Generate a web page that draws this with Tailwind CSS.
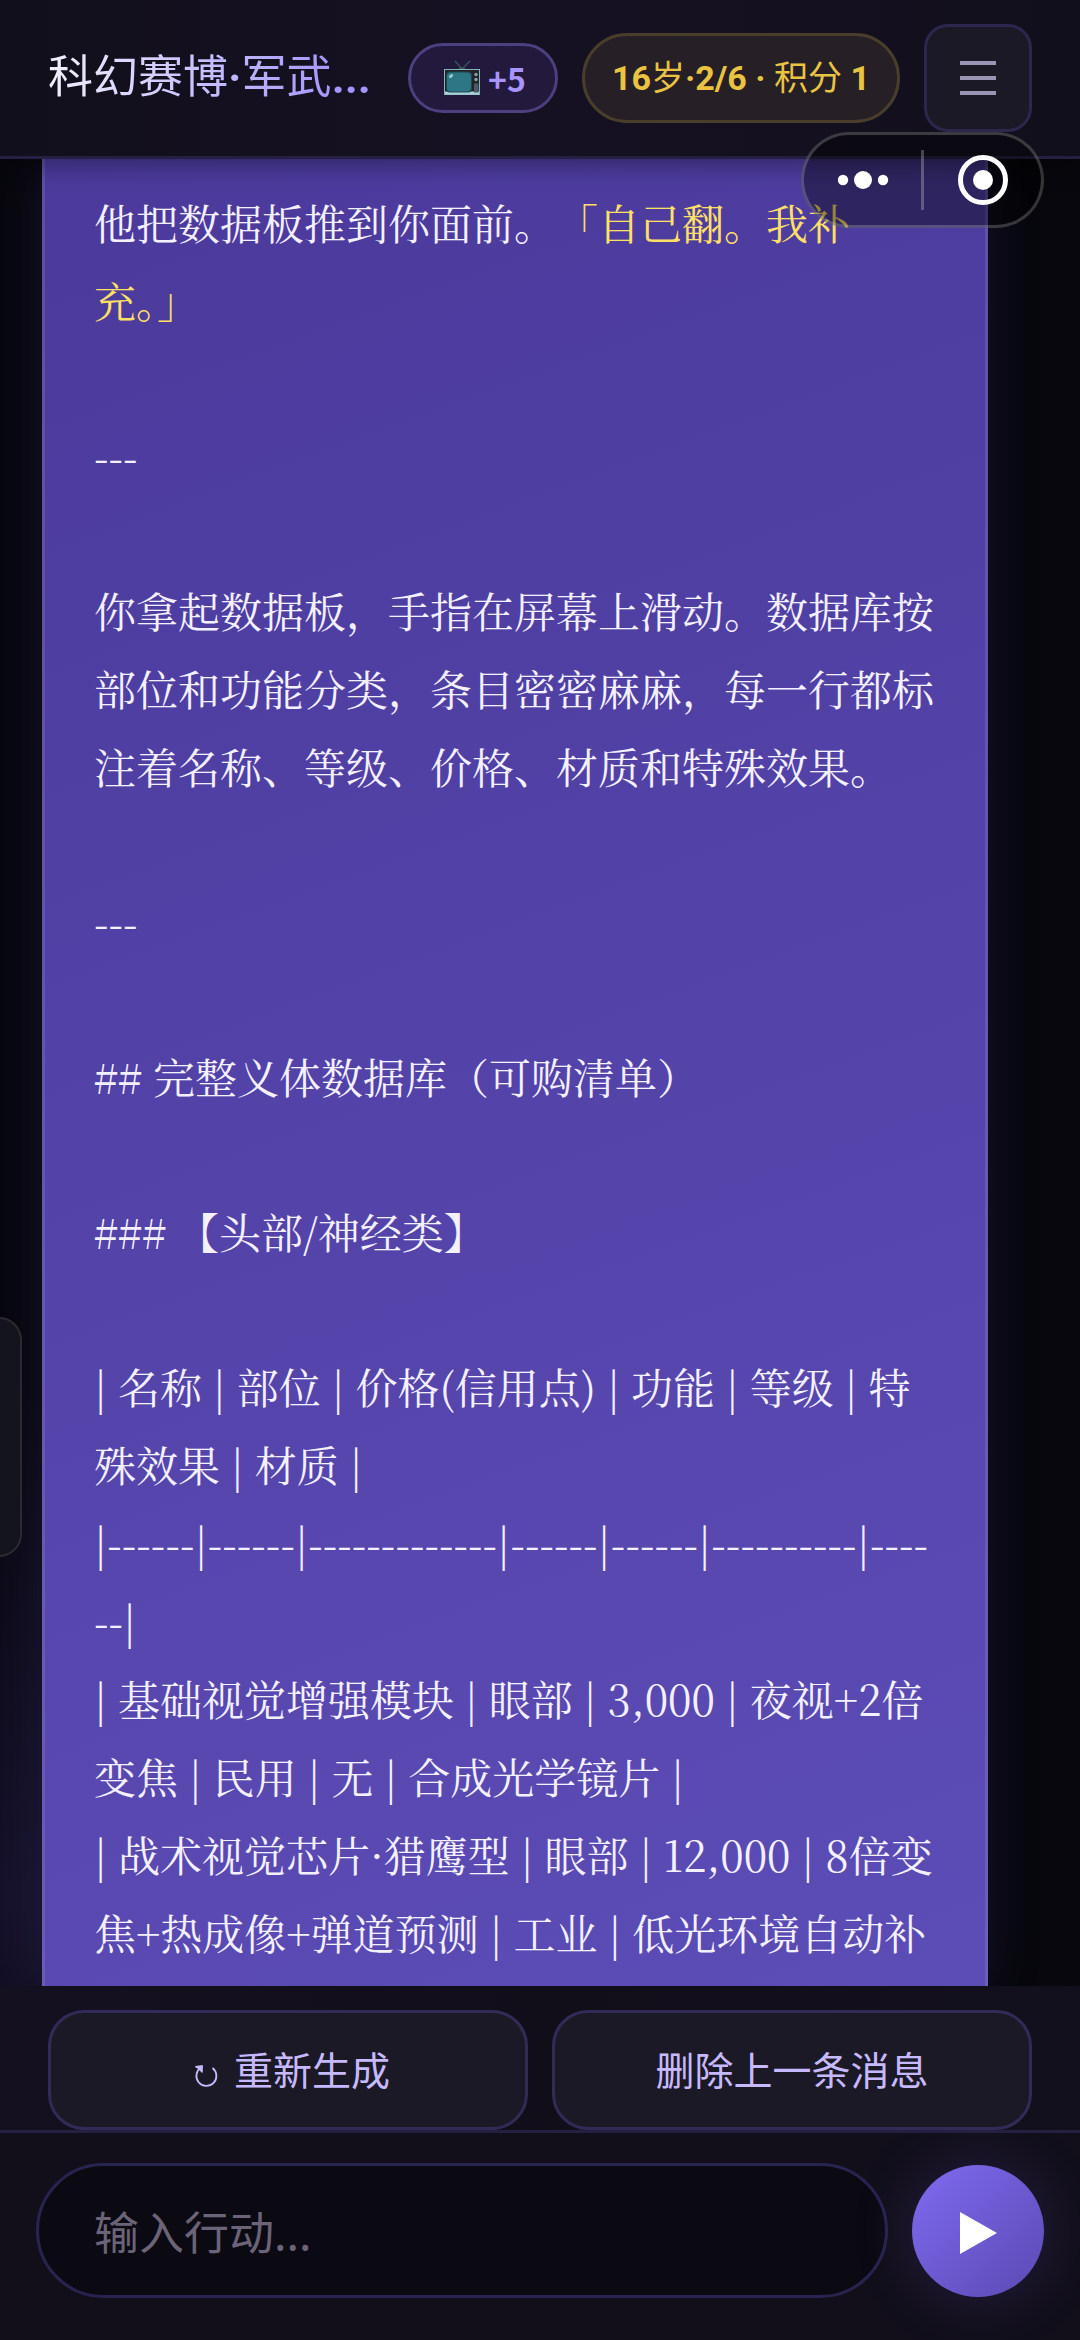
<!DOCTYPE html>
<html lang="zh-CN">
<head>
<meta charset="utf-8">
<meta name="viewport" content="width=device-width, initial-scale=1">
<title>科幻赛博·军武</title>
<script src="https://cdn.jsdelivr.net/npm/@tailwindcss/browser@4"></script>
</head>
<body class="flex h-screen flex-col overflow-hidden bg-[#07070d] font-['Noto_Sans_CJK_SC',sans-serif] text-[#f3f0ff]">

  <header class="relative z-10 flex h-[159px] shrink-0 items-center gap-6 border-b-[3px] border-[#252041] bg-linear-to-r from-[#120f1c] via-[#151122] to-[#120f1c] px-12 shadow-[0_4px_24px_rgba(0,0,0,0.4)]">
    <h1 class="min-w-0 flex-1 overflow-hidden bg-linear-to-r from-[#f3f0ff] to-[#a596ff] to-85% bg-clip-text font-[Roboto,'Noto_Sans_CJK_SC',sans-serif] text-[45px] leading-[64px] whitespace-nowrap text-transparent">科幻赛博<b>·</b>军武<b>...</b></h1>
    <button type="button" class="flex h-[70px] w-[150px] shrink-0 items-center justify-center gap-2 rounded-full border-[3px] border-[#4d3f80] bg-[#23193c] pl-1 text-[32px] font-bold text-[#a794ff]">
      <svg class="h-9 w-9 shrink-0" viewBox="0 0 36 36" aria-hidden="true">
        <path d="M11 1l7 8 8-8" fill="none" stroke="#3c5a5c" stroke-width="1.2"/>
        <path d="M14 9q4-2.500 8 0z" fill="#3c5a5c"/>
        <rect x=".5" y="9.500" width="35" height="25" fill="#262228" stroke="#7fb5bd"/>
        <rect x="1" y="31.500" width="34" height="3" fill="#a9d3d8"/>
        <rect x="2" y="11.500" width="26" height="21" rx="4" fill="#1d4850"/>
        <rect x="3" y="12.500" width="24" height="19" rx="4" fill="#2d7685"/>
        <ellipse cx="7" cy="16" rx="2.500" ry="1.500" fill="#9cc9cf" transform="rotate(-40 7 16)"/>
        <circle cx="32" cy="14.500" r="1.700" fill="#7fa5b0"/><circle cx="32" cy="19.500" r="1.700" fill="#7fa5b0"/>
        <rect x="30" y="23.500" width="4.500" height="9" fill="#4b5968"/>
      </svg>
      <span>+5</span>
    </button>
    <div class="flex h-[90px] w-[318px] shrink-0 items-center justify-center rounded-full border-[3px] border-[#493e2b] bg-[#261f25] font-[Roboto,'Noto_Sans_CJK_SC',sans-serif] text-[34px] whitespace-pre text-[#e9c443]"><b>16</b>岁<b>·2/6 · </b>积分<b> 1</b></div>
    <button type="button" aria-label="菜单" class="flex h-[108px] w-[108px] shrink-0 items-center justify-center rounded-3xl border-[3px] border-[#2d264d] bg-[#1c1926]">
      <svg class="h-[34px] w-9" viewBox="0 0 36 34" aria-hidden="true"><path d="M0 2h36M0 17h36M0 32h36" stroke="#9a93b3" stroke-width="4"/></svg>
    </button>
  </header>

  <div class="absolute top-[132px] right-9 z-20 flex h-24 w-[243px] items-center rounded-full border-[3px] border-white/20 bg-black/40">
    <button type="button" aria-label="更多" class="flex flex-1 items-center justify-center">
      <svg class="h-5 w-[52px]" viewBox="0 0 52 20" fill="#fff" aria-hidden="true"><circle cx="6" cy="10" r="5.200"/><circle cx="26" cy="10" r="9"/><circle cx="46" cy="10" r="5.200"/></svg>
    </button>
    <span class="h-[60px] w-[3px] bg-white/25"></span>
    <button type="button" aria-label="关闭" class="flex flex-1 items-center justify-center">
      <svg class="h-[52px] w-[52px]" viewBox="0 0 52 52" aria-hidden="true"><circle cx="26" cy="26" r="22.500" fill="none" stroke="#fff" stroke-width="5"/><circle cx="26" cy="26" r="10" fill="#fff"/></svg>
    </button>
  </div>

  <div class="absolute top-[1317px] -left-6 z-20 h-60 w-[46px] rounded-3xl border-2 border-[#2a2a30] bg-[#14141f]"></div>

  <main class="min-h-0 flex-1 overflow-hidden bg-[radial-gradient(circle_at_0%_95%,#15122a,transparent_25%)]">
    <article class="mr-[92px] ml-[42px] flex min-h-full flex-col gap-[77px] border-x-[3px] border-white/10 bg-linear-160 from-[#4b3a9b] to-[#5c4cb6] bg-origin-border px-[49px] pt-6 font-['Noto_Serif_CJK_SC','Noto_Sans_CJK_SC',serif] text-[42px] leading-[78px] whitespace-nowrap shadow-[0_0_50px_rgba(90,75,180,0.18)]">
      <p><span class="[text-spacing-trim:space-all]">他把数据板推到你面前。<span class="text-[#ffe066]">「自己翻。我补</span></span><br><span class="text-[#ffe066]">充。」</span></p>
      <p>---</p>
      <p>你拿起数据板，手指在屏幕上滑动。数据库按<br>部位和功能分类，条目密密麻麻，每一行都标<br>注着名称、等级、价格、材质和特殊效果。</p>
      <p>---</p>
      <p>## 完整义体数据库（可购清单）</p>
      <p>### 【头部/神经类】</p>
      <p>| 名称 | 部位 | 价格(信用点) | 功能 | 等级 | 特<br>殊效果 | 材质 |<br>|------|------|-------------|------|------|----------|----<br>--|<br>| 基础视觉增强模块 | 眼部 | 3,000 | 夜视+2倍<br>变焦 | 民用 | 无 | 合成光学镜片 |<br>| 战术视觉芯片·猎鹰型 | 眼部 | 12,000 | 8倍变<br>焦+热成像+弹道预测 | 工业 | 低光环境自动补</p>
    </article>
  </main>

  <div class="z-10 grid shrink-0 grid-cols-2 gap-6 bg-linear-to-r from-[#141020] via-[#110e1a] to-[#13101d] px-12 pt-6 text-[39px] text-[#c6b9ff]">
    <button type="button" class="flex h-[120px] items-center justify-center gap-4 rounded-[36px] border-[3px] border-[#322b57] bg-[#1c1926] pb-1 pl-2">
      <svg class="mt-4 h-6 w-6" viewBox="0 0 24 24" fill="none" stroke="currentColor" stroke-width="1.800" aria-hidden="true"><path d="M18.500 4A10 10 0 1 1 7 3.500"/><path d="M1.500 2.800L8 2.200l-.3 6"/><path d="M3 3l4.500-.5L7.500 7z" fill="currentColor"/></svg>
      <span>重新生成</span>
    </button>
    <button type="button" class="h-[120px] rounded-[36px] border-[3px] border-[#322b57] bg-[#1c1926] pb-1">删除上一条消息</button>
  </div>

  <form class="flex shrink-0 items-center gap-6 border-t-[3px] border-[#252041] bg-[#120f1b] px-9 pt-[30px] pb-[42px]">
    <input type="text" aria-label="输入行动" placeholder="输入行动..." class="h-[135px] min-w-0 flex-1 rounded-full border-[3px] border-[#292350] bg-[#0b0a13] px-[55px] text-[45px] text-white placeholder:text-[#6b6478]">
    <button type="button" aria-label="发送" class="flex h-[132px] w-[132px] shrink-0 items-center justify-center rounded-full bg-linear-135 from-[#7f6bf0] to-[#5b4ab4] shadow-[0_0_60px_rgba(108,92,200,0.22)]">
      <svg class="mt-1 h-[42px] w-[37px]" viewBox="0 0 37 42" fill="#fff" aria-hidden="true"><path d="M0 0l37 21L0 42z"/></svg>
    </button>
  </form>
</body>
</html>
